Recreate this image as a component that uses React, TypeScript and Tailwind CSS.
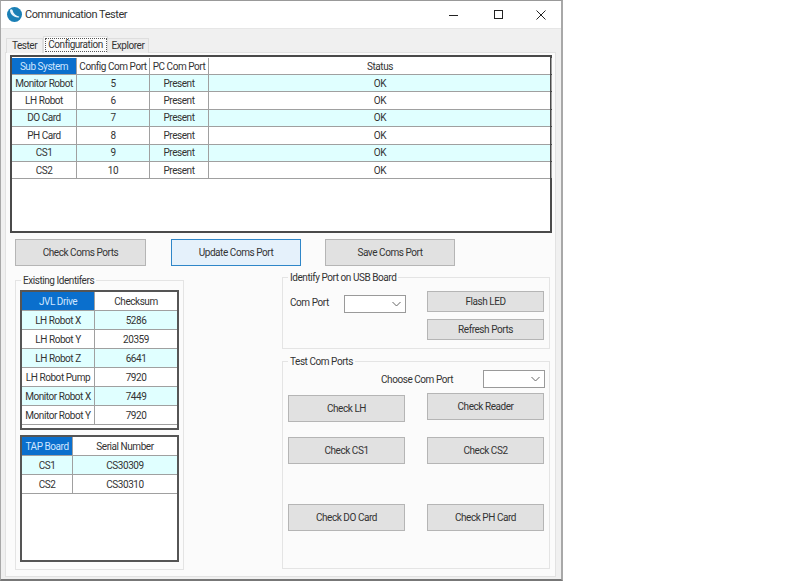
const font = { fontFamily: '"Roboto", "Liberation Sans", sans-serif' };

function Btn({ label, w, h, className = "" }: { label: string; w: string; h: string; className?: string }) {
  return (
    <div className={`${w} ${h} ${className} flex shrink-0 items-center justify-center whitespace-nowrap border border-[#b5b5b5] bg-[#e1e1e1] text-[10px] text-[#333]`}>
      {label}
    </div>
  );
}

function Combo() {
  return (
    <div className="flex h-[18px] w-[62px] shrink-0 items-center justify-end border border-[#9a9a9a] bg-white pr-[4px]">
      <svg width="9" height="6" viewBox="0 0 9 6" fill="none" stroke="#666" strokeWidth="1">
        <path d="M0.5 1 L4.5 5 L8.5 1" />
      </svg>
    </div>
  );
}

function Group({ title, className, children }: { title: string; className: string; children: React.ReactNode }) {
  return (
    <div className={`relative border border-[#e4e4e4] ${className}`}>
      <span className="absolute left-[5px] top-[-7px] whitespace-nowrap bg-[#fbfbfb] px-[2px] text-[10px] leading-[14px] text-[#333]">{title}</span>
      {children}
    </div>
  );
}

function Cell({ children, w, head, last }: { children?: React.ReactNode; w: string; head?: boolean; last?: boolean }) {
  return (
    <div
      className={`${w} flex h-full shrink-0 items-center justify-center whitespace-nowrap text-[10px] ${
        head ? "bg-[#0a6fcd] text-[#cfe6ff]" : "text-[#333]"
      } ${last ? "" : "border-r border-[#a0a0a0]"}`}
    >
      {children}
    </div>
  );
}

const mainRows = [
  ["Monitor Robot", "5", "Present", "OK"],
  ["LH Robot", "6", "Present", "OK"],
  ["DO Card", "7", "Present", "OK"],
  ["PH Card", "8", "Present", "OK"],
  ["CS1", "9", "Present", "OK"],
  ["CS2", "10", "Present", "OK"],
];

const driveRows = [
  ["LH Robot X", "5286"],
  ["LH Robot Y", "20359"],
  ["LH Robot Z", "6641"],
  ["LH Robot Pump", "7920"],
  ["Monitor Robot X", "7449"],
  ["Monitor Robot Y", "7920"],
];

const tapRows = [
  ["CS1", "CS30309"],
  ["CS2", "CS30310"],
];

function MainTable() {
  return (
    <div className="h-[178px] w-[542px] shrink-0 border-2 border-[#4a4a4a] bg-white">
      <div className="flex h-[18px] border-b border-[#a0a0a0] bg-white pt-[1px]">
        <Cell w="w-[65px]" head>Sub System</Cell>
        <Cell w="w-[73px]">Config Com Port</Cell>
        <Cell w="w-[59px]">PC Com Port</Cell>
        <Cell w="w-[343px]">Status</Cell>
      </div>
      {mainRows.map((r, i) => (
        <div key={r[0]} className={`flex h-[17.4px] border-b border-[#a0a0a0] ${i % 2 === 0 ? "bg-[#e0ffff]" : "bg-white"}`}>
          <Cell w="w-[65px]">{r[0]}</Cell>
          <Cell w="w-[73px]">{r[1]}</Cell>
          <Cell w="w-[59px]">{r[2]}</Cell>
          <Cell w="w-[343px]">{r[3]}</Cell>
        </div>
      ))}
    </div>
  );
}

function SmallTable({ head, rows, c1, c2, h }: { head: [string, string]; rows: string[][]; c1: string; c2: string; h: string }) {
  return (
    <div className={`${h} w-[159px] border-2 border-[#555] bg-white`}>
      <div className="flex h-[19px] border-b border-[#a0a0a0]">
        <Cell w={c1} head>{head[0]}</Cell>
        <Cell w={c2} last>{head[1]}</Cell>
      </div>
      {rows.map((r, i) => (
        <div key={r[0]} className={`flex h-[19px] border-b border-[#a0a0a0] ${i % 2 === 0 ? "bg-[#e0ffff]" : "bg-white"}`}>
          <Cell w={c1}>{r[0]}</Cell>
          <Cell w={c2} last>{r[1]}</Cell>
        </div>
      ))}
    </div>
  );
}

export default function App() {
  return (
    <div className="h-[581px] w-[800px] bg-white tracking-[-0.45px]" style={font}>
      <div className="flex h-[581px] w-[563px] flex-col border-b-2 border-l border-r-2 border-t border-[#a8a8a8] border-b-[#777] border-t-[#999] bg-[#f0f0f0]">
        {/* title bar */}
        <div className="flex h-[27px] shrink-0 items-center bg-white pl-[6px]">
          <svg width="15" height="15" viewBox="0 0 15 15" className="shrink-0">
            <circle cx="7.5" cy="7.5" r="7.5" fill="#1a7fb5" />
            <path d="M3 3.5 C3.5 7.5 6 10 11 10.5 C12 10.6 12.5 10 12 9.5 C9 9 6.5 7 5.5 3 C5 2 3.2 2 3 3.5 Z" fill="#e8f4fb" />
          </svg>
          <span className="ml-[3px] mt-[1px] whitespace-nowrap text-[11px] text-[#333]">Communication Tester</span>
          <div className="ml-auto flex items-center">
            <svg width="10" height="10" viewBox="0 0 10 10" className="mr-[35px]" fill="none" stroke="#222"><path d="M0 5.5 H9" /></svg>
            <svg width="9" height="9" viewBox="0 0 9 9" className="mr-[33px]" fill="none" stroke="#222"><rect x="0.5" y="0.5" width="8" height="8" /></svg>
            <svg width="10" height="10" viewBox="0 0 10 10" className="mr-[15px]" fill="none" stroke="#222"><path d="M0.5 0.5 L9.5 9.5 M9.5 0.5 L0.5 9.5" /></svg>
          </div>
        </div>
        {/* tabs */}
        <div className="relative z-10 mb-[-1px] flex h-[25px] shrink-0 items-end border-t border-[#e6e6e6] pl-[5px] text-[10px] text-[#333]">
          <div className="flex h-[15px] w-[37px] items-center justify-center border-l border-r border-t border-[#dedede] bg-[#f0f0f0] pb-[1px]">Tester</div>
          <div className="flex h-[17px] w-[65px] items-center justify-center border-l border-r border-t border-[#dedede] bg-[#fbfbfb] pb-[1px]">
            <span className="flex h-[14px] w-[62px] items-center justify-center whitespace-nowrap border border-dotted border-[#555]">Configuration</span>
          </div>
          <div className="flex h-[15px] w-[41px] items-center justify-center border-r border-t border-[#dedede] bg-[#ededed] pb-[1px]">Explorer</div>
        </div>
        {/* page */}
        <div className="ml-[4px] flex h-[525px] w-[551px] flex-col border border-[#e2e2e2] bg-[#fbfbfb] pl-[4px] pt-[2px]">
          <MainTable />
          <div className="ml-[5px] mt-[6px] flex gap-[24px]">
            <Btn label="Check Coms Ports" w="w-[131px]" h="h-[27px]" />
            <Btn label="Update Coms Port" w="w-[130px]" h="h-[27px]" className="ml-[1px] !border-[#2f86c8] !bg-[#e5f1fb]" />
            <Btn label="Save Coms Port" w="w-[130px]" h="h-[27px]" />
          </div>
          <div className="ml-[5px] mt-[11px] flex">
            <Group title="Existing Identifers" className="mt-[3px] h-[290px] w-[169px] px-[4px] pt-[9px]">
              <SmallTable head={["JVL Drive", "Checksum"]} rows={driveRows} c1="w-[73px]" c2="w-[82px]" h="h-[140px]" />
              <div className="h-[5px]" />
              <SmallTable head={["TAP Board", "Serial Number"]} rows={tapRows} c1="w-[51px]" c2="w-[104px]" h="h-[127px]" />
            </Group>
            <div className="ml-[98px] flex flex-col">
              <Group title="Identify Port on USB Board" className="h-[72px] w-[268px]">
                <div className="flex pl-[7px] pt-[13px]">
                  <span className="mt-[5px] w-[54px] whitespace-nowrap text-[10px] leading-[14px] text-[#333]">Com Port</span>
                  <div className="mt-[4px]"><Combo /></div>
                  <div className="ml-[21px] flex flex-col gap-[7px]">
                    <Btn label="Flash LED" w="w-[117px]" h="h-[21px]" />
                    <Btn label="Refresh Ports" w="w-[117px]" h="h-[21px]" />
                  </div>
                </div>
              </Group>
              <Group title="Test Com Ports" className="mt-[12px] h-[208px] w-[268px]">
                <div className="flex items-center justify-end pr-[4px] pt-[8px]">
                  <span className="mr-[30px] whitespace-nowrap text-[10px] text-[#333]">Choose Com Port</span>
                  <Combo />
                </div>
                <div className="ml-[5px] mt-[5px] flex items-start gap-[22px]">
                  <Btn label="Check LH" w="w-[117px]" h="h-[27px]" className="mt-[2px]" />
                  <Btn label="Check Reader" w="w-[117px]" h="h-[27px]" />
                </div>
                <div className="ml-[5px] mt-[15px] flex gap-[22px]">
                  <Btn label="Check CS1" w="w-[117px]" h="h-[27px]" />
                  <Btn label="Check CS2" w="w-[117px]" h="h-[27px]" />
                </div>
                <div className="ml-[5px] mt-[40px] flex gap-[22px]">
                  <Btn label="Check DO Card" w="w-[117px]" h="h-[27px]" />
                  <Btn label="Check PH Card" w="w-[117px]" h="h-[27px]" />
                </div>
              </Group>
            </div>
          </div>
        </div>
      </div>
    </div>
  );
}
